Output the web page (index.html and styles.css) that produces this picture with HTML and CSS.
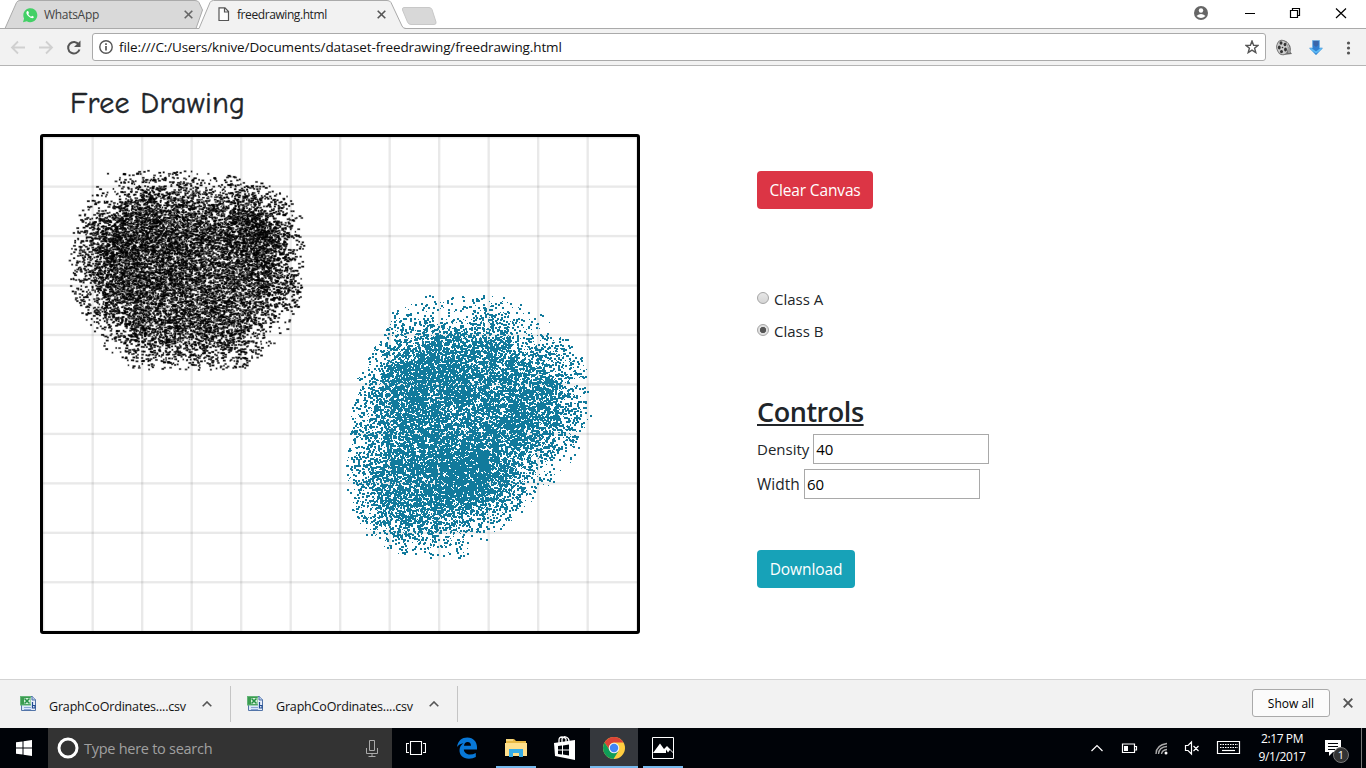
FILE: index.html
```html
<!DOCTYPE html>
<html lang="en">
<head>
<meta charset="utf-8">
<title>freedrawing.html</title>
<link rel="stylesheet" href="styles.css">
</head>
<body>
<div class="screen">
  <header class="tabstrip">
    <div class="tab tab-back">
      <svg class="tab-shape" width="203" height="29"><path d="M0 28.5H5L16.5 2.5Q17.5.5 20 .5H195Q198 .5 199 2.500L202.500 10 196 28.500Z" fill="#d9d9d9" stroke="#aaa"/></svg>
      <svg class="fav" width="16" height="16" viewBox="0 0 16 16"><path d="M1 15.300 2.100 11.500A7 7 0 1 1 4.800 14.300Z" fill="#43d066"/><path d="M5 4.200c-1.300 1-.5 3.200 1.500 5.100s4.300 2.700 5.200 1.300c.3-.6.2-1-.3-1.200l-1.300-.6-.9 1C7.800 9.200 6.700 8.200 6.300 7l.7-.9-.6-1.500c-.3-.6-.9-.8-1.400-.4Z" fill="#fff"/></svg>
      <span class="tab-title title-wa">WhatsApp</span>
      <svg class="tab-x" width="9" height="9"><path d="M.7.7 8.300 8.300M8.300.7.7 8.300" stroke="#666" stroke-width="1.600"/></svg>
    </div>
    <div class="tab tab-front">
      <svg class="tab-shape" width="208" height="29"><path d="M0 28.500H1L12 2.500Q13 .5 15.500 .5H189Q192 .5 193 2.500L204 26Q205 28.500 207 28.500V29H0Z" fill="#f2f2f2"/><path d="M0 28.500H1L12 2.500Q13 .5 15.500 .5H189Q192 .5 193 2.500L204 26Q205 28.500 208 28.500" fill="none" stroke="#aaa"/></svg>
      <svg class="fav" width="12" height="15"><path d="M1 .8H7L10.500 4.500V13.500H1ZM6.500 1V5H10.500" fill="#fff" stroke="#555" stroke-width="1.200"/></svg>
      <span class="tab-title title-fd">freedrawing.html</span>
      <svg class="tab-x" width="9" height="9"><path d="M.7.7 8.300 8.300M8.300.7.7 8.300" stroke="#555" stroke-width="1.600"/></svg>
    </div>
    <svg class="newtab" width="36" height="19"><path d="M3 .5H28Q30 .5 31 2.500L35 15Q35.500 17.500 33 17.500H10Q7.500 17.500 6.500 15L1.500 3Q1 .5 3 .5Z" fill="#d8d8d8" stroke="#c8c8c8"/></svg>
    <svg class="winbtns" width="166" height="28">
      <circle cx="15" cy="13" r="7" fill="#666"/><circle cx="15" cy="10.500" r="2.200" fill="#fff"/><path d="M10.500 16Q15 12 19.500 16 15 20 10.500 16Z" fill="#fff"/>
      <path d="M59 13.500H69" stroke="#000"/>
      <path d="M104.500 10.500H111.500V17.500H104.500ZM106.500 10V8.500H113.500V15.500H112" fill="none" stroke="#000" stroke-width="1.200"/>
      <path d="M150 8.500 160 18M160 8.500 150 18" stroke="#000" stroke-width="1.200"/>
    </svg>
  </header>
  <nav class="toolbar">
    <svg class="navicons" width="92" height="37">
      <path d="M25 18.500H12.500M18 12.500 12 18.500 18 24.500M39 18.500H51.500M46 12.500 52 18.500 46 24.500" fill="none" stroke="#d0d0d0" stroke-width="1.800"/>
      <path d="M78.800 15.500A5.800 5.800 0 1 0 79.500 20.500" fill="none" stroke="#555" stroke-width="2"/><path d="M80.500 11.500V18H74Z" fill="#555"/>
    </svg>
    <div class="omnibox">
      <svg width="14" height="14"><circle cx="7" cy="7" r="6.200" fill="none" stroke="#555" stroke-width="1.400"/><path d="M7 6V10.500M7 3.300V5" stroke="#555" stroke-width="1.700"/></svg>
      <span class="url">file:///C:/Users/knive/Documents/dataset-freedrawing/freedrawing.html</span>
      <svg class="star" width="14" height="14" viewBox="0 0 14 14"><path d="M7 1 8.600 5.200 13 5.400 9.600 8.200 10.800 12.600 7 10.200 3.200 12.600 4.400 8.200 1 5.400 5.400 5.200Z" fill="none" stroke="#555" stroke-width="1.400"/></svg>
    </div>
    <svg class="exticons" width="100" height="37">
      <path d="M14 11 20 12Q26 16 24.500 23L26 25 17 26Z" fill="#666"/><ellipse cx="16.500" cy="18.500" rx="5.800" ry="7.300" transform="rotate(-10 16.500 18.500)" fill="#ccc" stroke="#777"/><g fill="#333"><ellipse cx="15" cy="14" rx="1.500" ry="1.700"/><ellipse cx="19" cy="15.500" rx="1.400" ry="1.800"/><ellipse cx="13.300" cy="18.500" rx="1.400" ry="1.900"/><ellipse cx="15.500" cy="22.600" rx="1.500" ry="1.700"/><ellipse cx="19.500" cy="20.500" rx="1.400" ry="1.900"/><circle cx="16.500" cy="18.500" r=".8"/></g><path d="M21 13.500Q24 18 23 24" fill="none" stroke="#ccc"/>
      <path d="M46.500 11.500H53.500V19H56.500L50 26 43.500 19H46.500Z" fill="#2f7fd0" stroke="#72afe0" stroke-width=".8"/><path d="M47.500 12H52.500V16L50 18 47.500 16Z" fill="#3a66a8"/><path d="M44.500 19.500 50 23.500 55.500 19.500" fill="none" stroke="#5cbaf5" stroke-width="1.600"/>
      <g fill="#555"><circle cx="82.500" cy="14" r="1.600"/><circle cx="82.500" cy="19" r="1.600"/><circle cx="82.500" cy="24" r="1.600"/></g>
    </svg>
  </nav>
  <main class="page">
    <section class="drawing">
      <h1 class="heading">Free Drawing</h1>
      <canvas class="board" id="board" width="594" height="494"></canvas>
    </section>
    <section class="side">
      <button class="btn btn-danger"><span class="t-clear">Clear Canvas</span></button>
      <div class="classes">
        <label class="choice"><i class="radio"></i><span class="t-class">Class A</span></label>
        <label class="choice"><i class="radio radio-on"></i><span class="t-class">Class B</span></label>
      </div>
      <h2 class="controls">Controls</h2>
      <div class="field"><label class="t-density">Density</label><input class="num" value="40"></div>
      <div class="field"><label class="t-width">Width</label><input class="num" value="60"></div>
      <button class="btn btn-info"><span class="t-download">Download</span></button>
    </section>
  </main>
  <footer class="downloads">
    <div class="dl-item">
      <svg class="csv" width="17" height="17"><path d="M5.500 1.500H12.500L15.500 4.500V15.500H5.500Z" fill="#e8eefb" stroke="#5274a8"/><path d="M12 1V5H16" fill="#b8c9e8" stroke="#5274a8"/><path d="M1.500 9V15.500H12" fill="none" stroke="#5274a8"/><path d="M2 10H12V15H2Z" fill="#dde8fa"/><path d="M4 12.500H11M4 14.500H11" stroke="#8aa5d5"/><rect x=".5" y="1.500" width="10" height="8.500" fill="#3b9c50" stroke="#63b577"/><rect x="4" y="3" width="6.500" height="6" fill="#d5efda"/><path d="M4.500 3.500 9.500 8.500M9.500 3.500 4.500 8.500" stroke="#249044" stroke-width="1.500"/><path d="M12.500 7V13H15V10.500H12.500" fill="none" stroke="#214d91" stroke-width="1.200"/></svg>
      <span class="dl-name">GraphCoOrdinates....csv</span>
      <svg class="caret" width="10" height="6"><path d="M.7 5.300 5 1 9.300 5.300" fill="none" stroke="#555" stroke-width="1.600"/></svg>
    </div>
    <div class="dl-item">
      <svg class="csv" width="17" height="17"><path d="M5.500 1.500H12.500L15.500 4.500V15.500H5.500Z" fill="#e8eefb" stroke="#5274a8"/><path d="M12 1V5H16" fill="#b8c9e8" stroke="#5274a8"/><path d="M1.500 9V15.500H12" fill="none" stroke="#5274a8"/><path d="M2 10H12V15H2Z" fill="#dde8fa"/><path d="M4 12.500H11M4 14.500H11" stroke="#8aa5d5"/><rect x=".5" y="1.500" width="10" height="8.500" fill="#3b9c50" stroke="#63b577"/><rect x="4" y="3" width="6.500" height="6" fill="#d5efda"/><path d="M4.500 3.500 9.500 8.500M9.500 3.500 4.500 8.500" stroke="#249044" stroke-width="1.500"/><path d="M12.500 7V13H15V10.500H12.500" fill="none" stroke="#214d91" stroke-width="1.200"/></svg>
      <span class="dl-name">GraphCoOrdinates....csv</span>
      <svg class="caret" width="10" height="6"><path d="M.7 5.300 5 1 9.300 5.300" fill="none" stroke="#555" stroke-width="1.600"/></svg>
    </div>
    <button class="showall"><span class="t-show">Show all</span></button>
    <svg class="dl-close" width="10" height="10"><path d="M.7.7 9.300 9.300M9.300.7.7 9.300" stroke="#555" stroke-width="1.900"/></svg>
  </footer>
  <div class="taskbar">
    <div class="app"><svg width="16" height="16"><path d="M0 2.300 6.500 1.400V7.500H0ZM7.500 1.200 16 0V7.500H7.500ZM0 8.500H6.500V14.600L0 13.700ZM7.500 8.500H16V16L7.500 14.800Z" fill="#fff"/></svg></div>
    <div class="search">
      <svg width="22" height="22"><circle cx="11" cy="11" r="9" fill="none" stroke="#fff" stroke-width="3"/></svg>
      <span class="t-search">Type here to search</span>
      <svg width="12" height="17"><path d="M3.500.5H8.500V10.500H3.500ZM.5 8V13.500H11.500V8M6 13.500V16M2.500 16.500H9.500" fill="none" stroke="#aaa"/></svg>
    </div>
    <div class="app"><svg width="20" height="14"><path d="M4.500.5H15.500V13.500H4.500ZM3 2.500H.5V11.500H3M17 2.500H19.500V11.500H17" fill="none" stroke="#fff" stroke-width="1.100"/></svg></div>
    <div class="app gap3"><svg width="20" height="22" viewBox="0 0 20 22"><path d="M0 10C1 3.500 5 .5 10.300.5 16.500.5 20 5 20 10V12.500H6.800C7.200 16 10 17.500 13 17.500Q16 17.500 18.800 16V20Q16 21.700 12 21.700C6 21.700 2.300 18 2.500 13 2.600 10 4.200 7.500 6.500 6.200 3.500 6.500 1.300 8 0 10ZM7 8.800H14C14 6.500 12.800 5 10.600 5 8.500 5 7.200 6.700 7 8.800Z" fill="#0878d7" fill-rule="evenodd"/></svg></div>
    <div class="app gap1 running"><svg width="22" height="20"><path d="M1 1H9L11 3H21V18H1Z" fill="#e8b945"/><path d="M0 5H22V18H0Z" fill="#ffe08c"/><path d="M1 2H8" stroke="#fff0ba"/><path d="M4 19V11H18V19H14V15H8V19Z" fill="#36ade7"/></svg></div>
    <div class="app gap1"><svg width="22" height="24"><path d="M0 7 21 4V24L1 20Z" fill="#fff"/><path d="M5 7V4Q5 1 8 1T12 3V6M8 6V3Q9 0 12 1T15 5" fill="none" stroke="#fff" stroke-width="1.300"/><path d="M4 10 8 9.500V13.500H4ZM9 9.400 15 8.600V13.500H9ZM4 14.500H8V18.500L4 18ZM9 14.500H15V19.400L9 18.600Z" fill="#000308"/></svg></div>
    <div class="app gap1 active"><svg width="22" height="22" viewBox="0 0 22 22"><circle cx="11" cy="11" r="11" fill="#ffcd40"/><path d="M1.500 5.500A11 11 0 0 1 20.500 5.500H11Q6 6 6 12Z" fill="#db4437"/><path d="M1.500 5.500A11 11 0 0 0 10.500 22L15.500 14Q9 18 6 12Z" fill="#0f9d58"/><circle cx="11" cy="11" r="5.300" fill="#f1f1f1"/><circle cx="11" cy="11" r="4.200" fill="#4285f4"/></svg></div>
    <div class="app gap1 running"><svg width="22" height="22"><path d="M.5.500H21.500V21.500H.5Z" fill="#000308" stroke="#fff"/><path d="M1 16 8 6.500 12 12 15 9 21 15V16L18 13 16 15.500 14 12.500 14 16Z" fill="#fff"/></svg></div>
    <svg class="tray" width="160" height="40">
      <g fill="none" stroke="#fff" stroke-width="1.200"><path d="M5.500 23 11 17.500 16.500 23"/><path d="M36.500 16H48.500V24.500H36.500ZM49 18.500H50.500V22H49"/><path d="M99.500 17.500H102L105.500 14V26L102 22.500H99.500ZM107.500 18 112.500 23M112.500 18 107.500 23"/><path d="M131.500 13.500H153.500V25.500H131.500Z"/><path d="M134 16.500H152M134 19.500H152" stroke-dasharray="1.500 1"/><path d="M136 22.500H149"/></g>
      <rect x="38" y="18" width="4" height="5" fill="#fff"/>
      <g fill="none" stroke="#aaa" stroke-width="1.300"><path d="M70 26Q70 17 81 15.500M72.500 26Q73 19 81 18.500M75.500 26Q76 22 81 21.500"/></g><circle cx="80" cy="25" r="1.500" fill="#fff"/>
    </svg>
    <div class="clock"><span class="t-time">2:17 PM</span><span class="t-date">9/1/2017</span></div>
    <div class="notice"><svg width="17" height="17"><path d="M0 0H16V12H8L4 16V12H0Z" fill="#fff"/><path d="M3 3.500H13M3 6.500H13M3 9.500H10" stroke="#000308"/></svg><span class="badge">1</span></div>
  </div>
</div>
<script src="draw.js"></script>
</body>
</html>
```
FILE: styles.css
```css
* { box-sizing: border-box; }
body { margin: 0; font-family: "Open Sans", "Noto Sans", sans-serif; color: #212529; }
svg { display: block; flex: none; }
span, label { white-space: nowrap; }
.screen { width: 1366px; height: 768px; display: flex; flex-direction: column; background: #fff; overflow: hidden; }
.tabstrip { height: 29px; display: flex; align-items: flex-start; background: linear-gradient(#aaa, #aaa) 0 28px / 100% 1px no-repeat #fff; }
.tab { position: relative; height: 29px; display: flex; align-items: center; font-size: 12px; }
.tab-shape { position: absolute; left: 0; top: 0; }
.tab .fav, .tab-title, .tab-x { position: relative; }
.tab-back { width: 198px; padding-left: 22px; }
.tab-front { width: 203px; padding-left: 20px; }
.tab-title { margin-left: 7px; height: 18px; line-height: 18px; }
.title-wa { width: 140px; color: #444; letter-spacing: -.3px; margin-left: 6px; }
.title-fd { width: 140px; color: #222; letter-spacing: -.42px; }
.newtab { margin: 7px 0 0 0; }
.winbtns { margin-left: auto; margin-right: 14px; }
.toolbar { height: 37px; display: flex; align-items: center; background: #f2f2f2; border-bottom: 1px solid #b5b5b5; }
.omnibox { flex: 1; height: 28px; display: flex; align-items: center; gap: 6px; padding: 0 6px; background: #fff; border: 1px solid #aaa; border-radius: 3px; }
.url { font-size: 13.500px; color: #111; letter-spacing: -.12px; }
.star { margin-left: auto; }
.page { height: 613px; display: grid; grid-template-columns: 717px 1fr; padding-left: 40px; }
.heading { margin: 0 0 0 30px; height: 68px; padding-top: 17px; font: 400 30px/42px "Comic Sans MS", "Comic Neue", cursive; letter-spacing: .3px; white-space: nowrap; -webkit-text-stroke: .4px #212529; }
.board { display: block; width: 600px; height: 500px; border: 3px solid #000; border-radius: 3px; }
.side { padding-top: 105px; display: flex; flex-direction: column; align-items: flex-start; font-size: 15px; }
.btn { height: 38px; padding: 0; border: 0; border-radius: 4px; color: #fff; font-family: inherit; font-size: 15.500px; }
.btn-danger { width: 116px; background: #dc3545; letter-spacing: -.15px; }
.btn-info { width: 98px; background: #17a2b8; margin-top: 51px; letter-spacing: -.1px; }
.classes { margin-top: 74px; }
.choice { height: 32px; display: flex; align-items: center; gap: 5px; }
.radio { width: 12px; height: 12px; margin-bottom: 3px; border: 1px solid #a5a5a5; border-radius: 50%; background: linear-gradient(#e8e8e8, #d5d5d5); }
.radio-on { background: radial-gradient(circle, #555 0 2.800px, #e0e0e0 3.500px); }
.controls { height: 40px; margin: 45px 0 2px; font-size: 27px; line-height: 40px; font-weight: 600; letter-spacing: -.45px; text-decoration: underline; text-decoration-thickness: 2px; text-underline-offset: 2px; text-decoration-skip-ink: none; }
.field { height: 30px; display: flex; align-items: center; gap: 4px; }
.field + .field { margin-top: 5px; }
.t-width { font-size: 15.500px; width: 43px; }
.num { width: 176px; height: 30px; border: 1px solid #a9a9a9; padding: 1px 2px; font: 15px "Open Sans", sans-serif; letter-spacing: -.2px; color: #000; }
.downloads { height: 49px; display: flex; align-items: center; background: #f2f2f2; border-top: 1px solid #d3d3d3; }
.dl-item { height: 36px; display: flex; align-items: center; border-right: 1px solid #c5c5c5; width: 231px; padding-left: 20px; }
.dl-item + .dl-item { width: 227px; padding-left: 16px; }
.csv { margin-bottom: 2px; }
.dl-name { width: 138px; margin-left: 12px; padding-top: 4px; font-size: 12.500px; letter-spacing: -.17px; color: #111; }
.caret { margin-left: 15px; }
.showall { width: 78px; height: 28px; margin: 0 13px 2px auto; border: 1px solid #aaa; border-radius: 3px; background: #fbfbfb; padding: 0; font: 12px "Open Sans", sans-serif; }
.dl-close { margin: 0 13px 2px 0; }
.taskbar { height: 40px; display: flex; background: #000308; color: #fff; }
.app { width: 48px; height: 40px; display: flex; align-items: center; justify-content: center; }
.gap3 { margin-left: 3px; }
.gap1 { margin-left: 1px; }
.running { background: linear-gradient(#76b9ed, #76b9ed) 4px 38px / 40px 2px no-repeat; }
.active { background: linear-gradient(#76b9ed, #76b9ed) 0 38px / 48px 2px no-repeat #35383d; }
.search { width: 344px; height: 40px; display: flex; align-items: center; padding: 0 14px 0 9px; background: #333; }
.t-search { margin-left: 5px; flex: 1; color: #a0a0a0; font-size: 14.500px; letter-spacing: -.27px; }
.tray { margin-left: 399px; }
.clock { width: 72px; display: flex; flex-direction: column; align-items: center; font-size: 12px; letter-spacing: -.4px; line-height: 18px; padding-top: 2px; }
.notice { position: relative; margin-left: 7px; padding-top: 12px; width: 34px; }
.notice::after { content: ""; position: absolute; left: 36px; top: 0; height: 40px; width: 1px; background: #777; }
.badge { position: absolute; left: 8px; top: 19px; width: 16px; height: 16px; border: 1px solid #777; border-radius: 50%; background: #333; font: 11px/14px "Open Sans", sans-serif; text-align: center; }
```
FILE: draw.js
```javascript
const board = document.getElementById('board');
const ctx = board.getContext('2d');
let seed = 4711;
function rnd() {
  seed = (seed + 0x6D2B79F5) | 0;
  let t = Math.imul(seed ^ (seed >>> 15), 1 | seed);
  t = (t + Math.imul(t ^ (t >>> 7), 61 | t)) ^ t;
  return ((t ^ (t >>> 14)) >>> 0) / 4294967296;
}

// grid
ctx.fillStyle = 'rgba(0,0,0,0.085)';
for (let i = 0; i <= 12; i++) ctx.fillRect(i * 49.5 - 1, 0, 2.4, 494);
for (let i = 0; i <= 10; i++) ctx.fillRect(0, i * 49.45 - 1, 594, 2.4);

// distance from a point to the outline of a polygon
function edgeDistance(x, y, poly) {
  let best = 1e9;
  for (let i = 0; i < poly.length; i++) {
    const [ax, ay] = poly[i], [bx, by] = poly[(i + 1) % poly.length];
    const dx = bx - ax, dy = by - ay;
    const t = Math.max(0, Math.min(1, ((x - ax) * dx + (y - ay) * dy) / (dx * dx + dy * dy)));
    best = Math.min(best, Math.hypot(x - ax - t * dx, y - ay - t * dy));
  }
  return best;
}
function inside(x, y, poly) {
  let hit = false;
  for (let i = 0, j = poly.length - 1; i < poly.length; j = i++) {
    const [ax, ay] = poly[i], [bx, by] = poly[j];
    if ((ay > y) !== (by > y) && x < (bx - ax) * (y - ay) / (by - ay) + ax) hit = !hit;
  }
  return hit;
}
// spots: [x, y, radius, amount] raise or thin out the spray locally
function spray(poly, depth, low, high, spots, dot) {
  const xs = poly.map(p => p[0]), ys = poly.map(p => p[1]);
  for (let y = Math.min(...ys); y <= Math.max(...ys); y++) {
    for (let x = Math.min(...xs); x <= Math.max(...xs); x++) {
      if (!inside(x, y, poly)) continue;
      let p = low + (high - low) * Math.min(1, Math.pow(edgeDistance(x, y, poly) / depth, 1.1));
      for (const [sx, sy, r, a] of spots) p *= 1 + a * Math.exp(-((x - sx) ** 2 + (y - sy) ** 2) / (r * r));
      if (rnd() < p) dot(x - 43, y - 137);
    }
  }
}

const black = [[107,172],[125,170],[185,170],[240,176],[270,183],[290,196],[303,220],[304,290],[297,325],[270,348],[245,368],[215,370],[135,370],[112,358],[95,335],[78,308],[68,280],[69,240],[74,222],[88,195]];
spray(black, 42, 0.045, 0.34, [[108,190,26,-.7],[280,335,30,-.75],[110,352,26,-.6],[225,262,14,-.25],[265,240,32,.45],[140,245,45,.3]], (x, y) => {
  const a = 0.75 + rnd() * 0.25, px = x + rnd() - .5, py = y + rnd() - .5, w = 1.1 + rnd() * 1.7;
  ctx.fillStyle = `rgba(0,0,0,${a * 0.28})`;
  ctx.fillRect(px - .4, py - .4, w + .8, 2.3);
  ctx.fillStyle = `rgba(0,0,0,${a * 0.95})`;
  ctx.fillRect(px, py, w, 1.5);
});
// pale flecks through the dense middle
for (let i = 0; i < 1500; i++) {
  const a = rnd() * 6.283, r = Math.sqrt(rnd());
  ctx.fillStyle = 'rgba(255,255,255,.35)';
  ctx.fillRect(145 + Math.cos(a) * r * 75, 130 + Math.sin(a) * r * 80, 1 + rnd() * 1.5, 1.2);
}

const teal = [[412,298],[425,295],[487,295],[510,297],[540,310],[558,326],[578,350],[590,368],[591,425],[582,443],[565,470],[540,493],[512,520],[491,535],[468,557],[435,558],[395,553],[367,537],[348,507],[344,460],[349,420],[357,378],[372,350],[386,326],[392,309]];
spray(teal, 46, 0.05, 0.39, [[450,300,36,-.7],[405,320,28,-.5],[530,325,38,-.65],[585,390,30,-.4],[560,475,34,-.8],[430,550,26,-.3],[480,545,26,-.7],[420,365,38,.4],[465,470,38,.5],[540,405,30,.1],[385,400,25,.2],[460,425,22,-.25],[385,440,30,-.1]], (x, y) => {
  ctx.fillStyle = '#117a9c';
  const s = rnd() < 0.3 ? 1 : 2;
  ctx.fillRect(x, y, s, s);
});
```
